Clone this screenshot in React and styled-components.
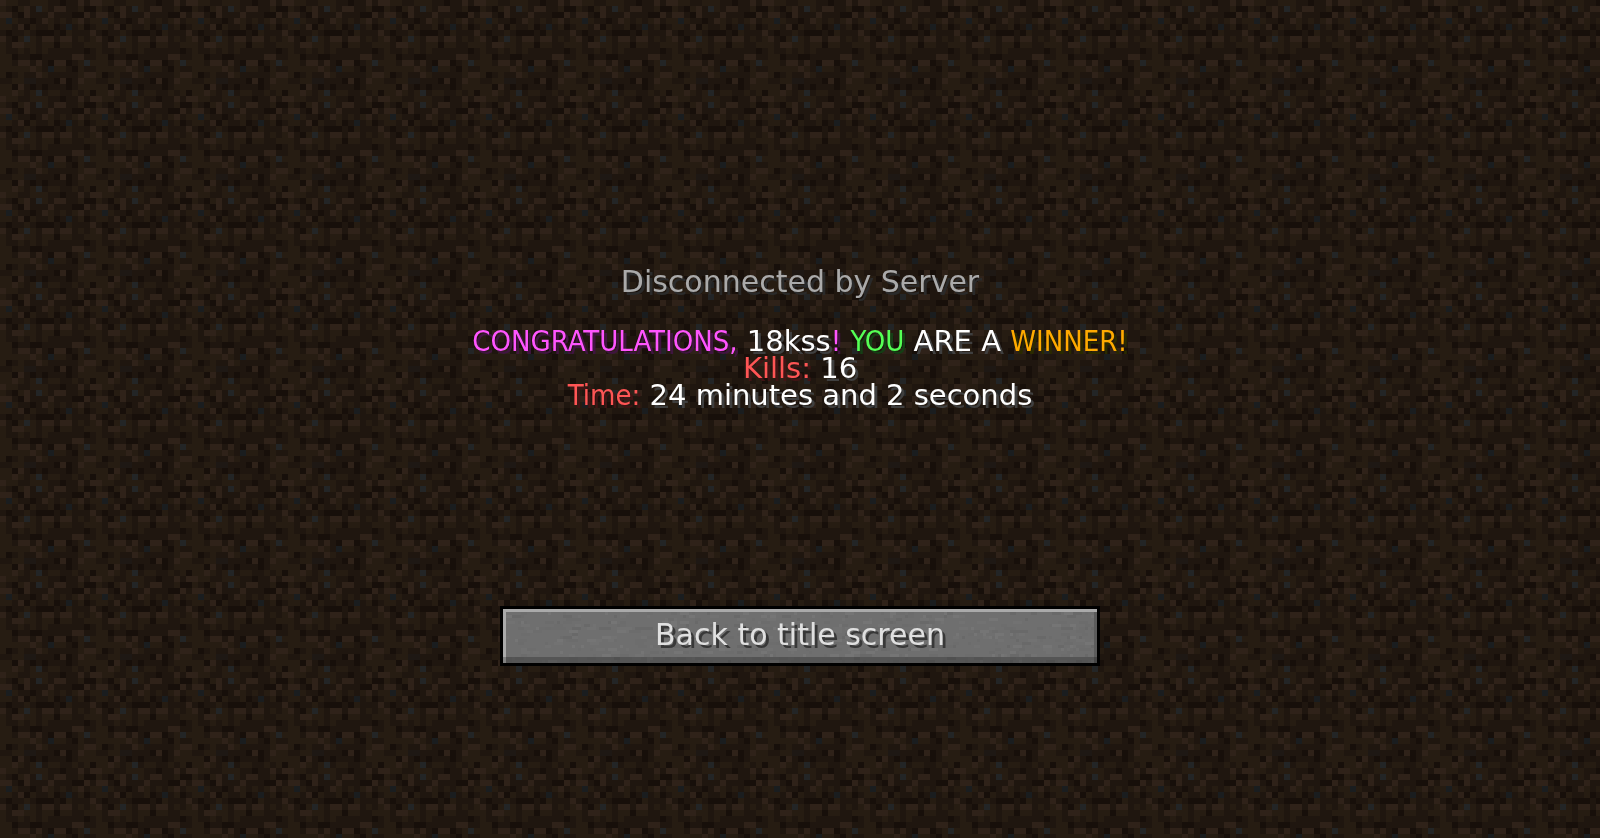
import React from "react";
import styled, { createGlobalStyle, css } from "styled-components";

// One 16x16 dirt tile, one letter per texel
const DIRT_ROWS = [
  "lbbaabbbaadaalal",
  "badblatballaabdd",
  "lladlaaalaaaddla",
  "bsbaadalbabablab",
  "bbaldbaabdasabda",
  "adaabadddadbaaal",
  "ladbtballallabab",
  "ballbbabbdbbaabb",
  "baabababaaaaaada",
  "bbdaaddaaaaallaa",
  "bballaladlldabtb",
  "bbbbblbasbbadbaa",
  "bdabaalbaaaaabll",
  "aabbggaaadldalbb",
  "bbdladadaaadabbb",
  "bblbabtabbaababd",
];

const DIRT_COLORS = {
  d: "#170f0a",
  a: "#1f160f",
  b: "#261c12",
  l: "#2f2219",
  g: "#1e1814",
  s: "#1a1d1f",
  t: "#232526",
};

// Small seeded generator so the stone keeps the same grain on every render
const makeGrain = (count) => {
  let seed = 7;
  const next = (max) => {
    seed = (seed * 16807) % 2147483647;
    return seed % max;
  };
  return Array.from({ length: count }, () => ({
    x: next(198) * 3,
    y: next(18) * 3,
    width: (1 + next(3)) * 3,
    fill: ["#6c6c6c", "#6d6d6d", "#727272", "#757575", "#696969"][next(5)],
  }));
};

const GRAIN = makeGrain(620);

const DirtBackground = () => (
  <Backdrop aria-hidden="true">
    <defs>
      <pattern id="dirt" width="96" height="96" patternUnits="userSpaceOnUse">
        {DIRT_ROWS.map((row, y) =>
          row.split("").map((texel, x) => (
            <rect key={`${x}-${y}`} x={x * 6} y={y * 6} width="6" height="6" fill={DIRT_COLORS[texel]} />
          ))
        )}
      </pattern>
    </defs>
    <rect width="100%" height="100%" fill="url(#dirt)" />
  </Backdrop>
);

const App = () => {
  return (
    <>
      <GlobalStyle />
      <DirtBackground />
      <Screen>
        <Title>Disconnected by Server</Title>
        <Message>
          <Line>
            <Colored $color="pink">CONGRATULATIONS,</Colored> 18kss<Colored $color="pink">!</Colored>{" "}
            <Colored $color="green">YOU</Colored> ARE A <Colored $color="gold">WINNER!</Colored>
          </Line>
          <Line>
            <Colored $color="red" $wide>Kills:</Colored> 16
          </Line>
          <Line>
            <Colored $color="red">Time:</Colored> 24 minutes and 2 seconds
          </Line>
        </Message>
        <MenuButton type="button">
          <Stone aria-hidden="true">
            {GRAIN.map((speck, i) => (
              <rect key={i} height="3" {...speck} />
            ))}
          </Stone>
          <ButtonLabel>Back to title screen</ButtonLabel>
        </MenuButton>
      </Screen>
    </>
  );
};

// Chat colours with their drop shadows
const CHAT_COLORS = {
  pink: ["#ff55ff", "#3f153f"],
  green: ["#55ff55", "#153f15"],
  gold: ["#ffaa00", "#2a2a00"],
  red: ["#ff5555", "#3f1515"],
};

// Styled Components
const GlobalStyle = createGlobalStyle`
  body {
    margin: 0;
    background: #1f160f;
    font-family: "DejaVu Sans", sans-serif;
    font-size: 29px;
    line-height: 27px;
  }
`;

const Backdrop = styled.svg`
  position: fixed;
  inset: 0;
  width: 100%;
  height: 100%;
  z-index: -1;
  shape-rendering: crispEdges;
`;

const Screen = styled.main`
  box-sizing: border-box;
  min-height: 100vh;
  padding: 32vh 16px 48px;
  display: flex;
  flex-direction: column;
  align-items: center;
  text-align: center;
`;

const Title = styled.h1`
  margin: 0 0 33px;
  font-size: 30px;
  font-weight: 400;
  color: #aaaaaa;
  text-shadow: 3px 3px 0 #2a2a2a;
`;

const Message = styled.div`
  margin-bottom: 197px;
`;

const Line = styled.p`
  margin: 0;
  color: #ffffff;
  text-shadow: 3px 3px 0 #3f3f3f;
`;

const Colored = styled.span`
  color: ${({ $color }) => CHAT_COLORS[$color][0]};
  text-shadow: 3px 3px 0 ${({ $color }) => CHAT_COLORS[$color][1]};
  ${({ $wide }) =>
    !$wide &&
    css`
      font-family: "DejaVu Sans Condensed", "DejaVu Sans", sans-serif;
    `}
`;

const MenuButton = styled.button`
  position: relative;
  box-sizing: border-box;
  width: 600px;
  max-width: 100%;
  height: 60px;
  padding: 0 0 3px;
  border: 3px solid #000000;
  background: #6f6f6f;
  color: #e0e0e0;
  font: inherit;
  font-size: 30px;
  text-shadow: 3px 3px 0 #383838;
  cursor: pointer;

  &::after {
    content: "";
    position: absolute;
    inset: 0;
    box-shadow:
      inset 0 -6px 0 rgba(0, 0, 0, 0.23),
      inset 0 3px 0 #aaaaaa,
      inset 3px 0 0 #aaaaaa,
      inset -3px 0 0 #5c5c5c;
  }

  &:hover {
    color: #ffffa0;
  }
`;

const Stone = styled.svg`
  position: absolute;
  inset: 0;
  width: 100%;
  height: 100%;
  shape-rendering: crispEdges;
`;

const ButtonLabel = styled.span`
  position: relative;
`;

export default App;
